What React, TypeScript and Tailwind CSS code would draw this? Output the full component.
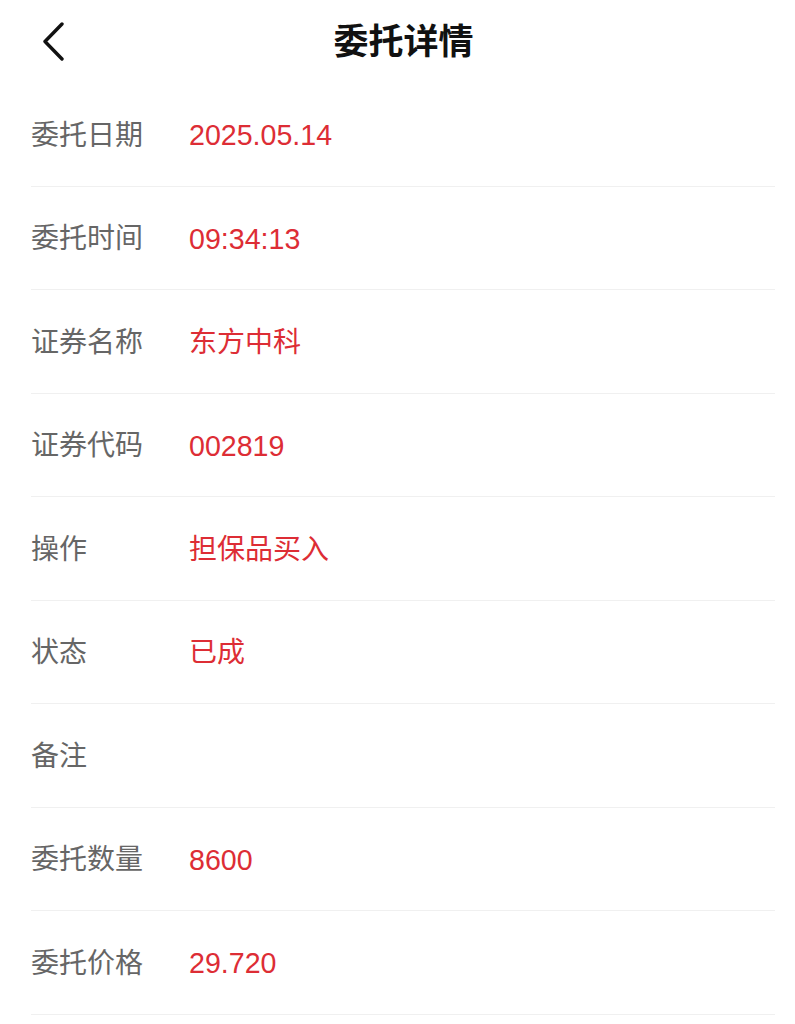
import React from "react";

const rows: [string, string][] = [
  ["委托日期", "2025.05.14"],
  ["委托时间", "09:34:13"],
  ["证券名称", "东方中科"],
  ["证券代码", "002819"],
  ["操作", "担保品买入"],
  ["状态", "已成"],
  ["备注", ""],
  ["委托数量", "8600"],
  ["委托价格", "29.720"],
];

export default function App() {
  return (
    <div
      className="w-[795px] h-[1024px] bg-white overflow-hidden"
      style={{ fontFamily: '"Liberation Sans", "Noto Sans CJK SC", sans-serif' }}
    >
      <div className="relative h-[83px] flex items-center justify-center">
        <svg
          className="absolute left-[40px] top-[22px]"
          width="26"
          height="40"
          viewBox="0 0 26 40"
          fill="none"
        >
          <path d="M22 2 L5 19.5 L22 37" stroke="#111" strokeWidth="3.4" strokeLinecap="round" strokeLinejoin="round" />
        </svg>
        <span className="pl-[12px] text-[35px] font-bold text-[#111] leading-none">委托详情</span>
      </div>
      <div className="ml-[31px] mr-[20px]">
        {rows.map(([label, value]) => {
          const numeric = /^[0-9.:]+$/.test(value);
          return (
            <div
              key={label}
              className="h-[103.5px] pt-[3px] flex items-center border-b border-[#f0f0f0]"
            >
              <span className="w-[158px] text-[28px] text-[#666666] leading-none">{label}</span>
              <span
                className={
                  numeric
                    ? "text-[28.6px] text-[#dd2d35] leading-none"
                    : "text-[28px] text-[#dd2d35] leading-none"
                }
              >
                {value}
              </span>
            </div>
          );
        })}
      </div>
    </div>
  );
}
